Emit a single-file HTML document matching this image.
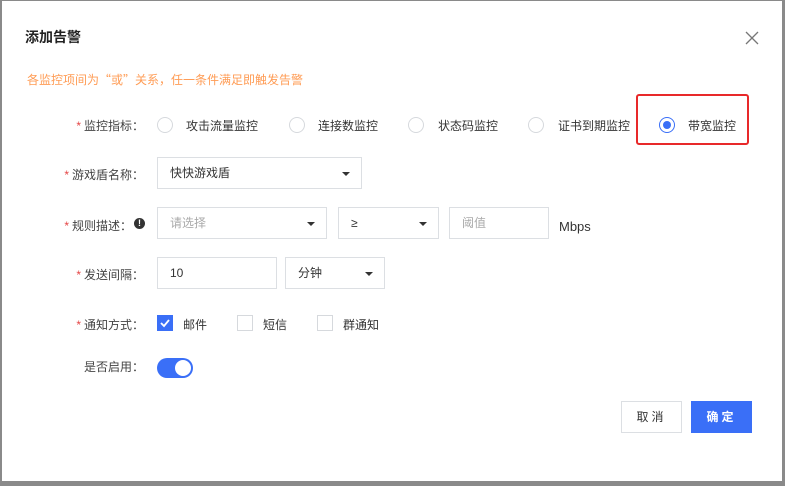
<!DOCTYPE html>
<html><head><meta charset="utf-8"><style>
*{margin:0;padding:0;box-sizing:border-box}
body{width:785px;height:486px;background:#8a8a8a;position:relative;overflow:hidden;font-family:"Liberation Sans","Noto Sans CJK SC",sans-serif;font-size:12px;color:#333}
#m{position:absolute;left:2px;top:1px;width:780px;height:480px;background:#fff}
.a{position:absolute;white-space:nowrap}
.lab{position:absolute;text-align:right;width:120px;left:22px;color:#444}
.lab b{color:#e54545;font-weight:normal;margin-right:3px}
.box{position:absolute;border:1px solid #dcdfe3;height:32px;background:#fff;line-height:30px;padding-left:12px}
.car{position:absolute;right:11px;top:14px;width:0;height:0;border-left:4px solid transparent;border-right:4px solid transparent;border-top:4px solid #333}
.r{position:absolute;width:16px;height:16px;border:1px solid #d6d9dd;border-radius:50%}
.cb{position:absolute;width:16px;height:16px;border:1px solid #d6d9dd}
</style></head><body><div id="m">
<div class="a" style="left:23px;top:26px;font-size:14px;font-weight:bold;color:#222">添加告警</div>
<svg class="a" style="left:743px;top:30px" width="14" height="14"><path d="M1 1L13 13M13 1L1 13" stroke="#777" stroke-width="1.3"/></svg>
<div class="a" style="left:25px;top:70px;color:#ff9c55;font-family:'Noto Sans CJK SC',sans-serif">各监控项间为“或”关系，任一条件满足即触发告警</div>

<div class="lab" style="top:116px"><b>*</b>监控指标：</div>
<div class="r" style="left:155px;top:116px"></div><div class="a" style="left:184px;top:116px">攻击流量监控</div>
<div class="r" style="left:287px;top:116px"></div><div class="a" style="left:316px;top:116px">连接数监控</div>
<div class="r" style="left:406px;top:116px"></div><div class="a" style="left:436px;top:116px">状态码监控</div>
<div class="r" style="left:526px;top:116px"></div><div class="a" style="left:556px;top:116px">证书到期监控</div>
<div class="a" style="left:634px;top:93px;width:113px;height:51px;border:2px solid #e8292a;border-radius:3px"></div>
<div class="r" style="left:657px;top:116px;border-color:#3a6ff7"><div style="position:absolute;left:3px;top:3px;width:8px;height:8px;border-radius:50%;background:#3a6ff7"></div></div>
<div class="a" style="left:686px;top:116px">带宽监控</div>

<div class="lab" style="top:165px"><b>*</b>游戏盾名称：</div>
<div class="box" style="left:155px;top:156px;width:205px">快快游戏盾<div class="car"></div></div>

<div class="lab" style="top:216px;left:10px"><b>*</b>规则描述：</div>
<div class="a" style="left:132px;top:217px;width:11px;height:11px;border-radius:50%;background:#333;color:#fff;font-size:9px;line-height:11px;text-align:center;font-weight:bold">!</div>
<div class="box" style="left:155px;top:206px;width:170px;color:#aaa">请选择<div class="car"></div></div>
<div class="box" style="left:336px;top:206px;width:101px">≥<div class="car"></div></div>
<div class="box" style="left:447px;top:206px;width:100px;color:#aaa">阈值</div>
<div class="a" style="left:557px;top:218px;font-size:13px">Mbps</div>

<div class="lab" style="top:265px"><b>*</b>发送间隔：</div>
<div class="box" style="left:155px;top:256px;width:120px">10</div>
<div class="box" style="left:283px;top:256px;width:100px">分钟<div class="car"></div></div>

<div class="lab" style="top:315px"><b>*</b>通知方式：</div>
<div class="cb" style="left:155px;top:314px;background:#3a6ff7;border-color:#3a6ff7"><svg width="14" height="14" style="position:absolute;left:0;top:0"><path d="M3 7L6 10L11 4" stroke="#fff" stroke-width="1.8" fill="none"/></svg></div>
<div class="a" style="left:181px;top:315px">邮件</div>
<div class="cb" style="left:235px;top:314px"></div><div class="a" style="left:261px;top:315px">短信</div>
<div class="cb" style="left:315px;top:314px"></div><div class="a" style="left:341px;top:315px">群通知</div>

<div class="lab" style="top:357px">是否启用：</div>
<div class="a" style="left:155px;top:357px;width:36px;height:20px;border-radius:10px;background:#3a6ff7"><div style="position:absolute;right:2px;top:2px;width:16px;height:16px;border-radius:50%;background:#fff"></div></div>

<div class="a" style="left:619px;top:400px;width:61px;height:32px;border:1px solid #dcdfe3;text-align:center;line-height:30px;letter-spacing:3px">取消</div>
<div class="a" style="left:689px;top:400px;width:61px;height:32px;background:#3a6ff7;color:#fff;font-weight:bold;text-align:center;line-height:32px;letter-spacing:3px">确定</div>
</div></body></html>
